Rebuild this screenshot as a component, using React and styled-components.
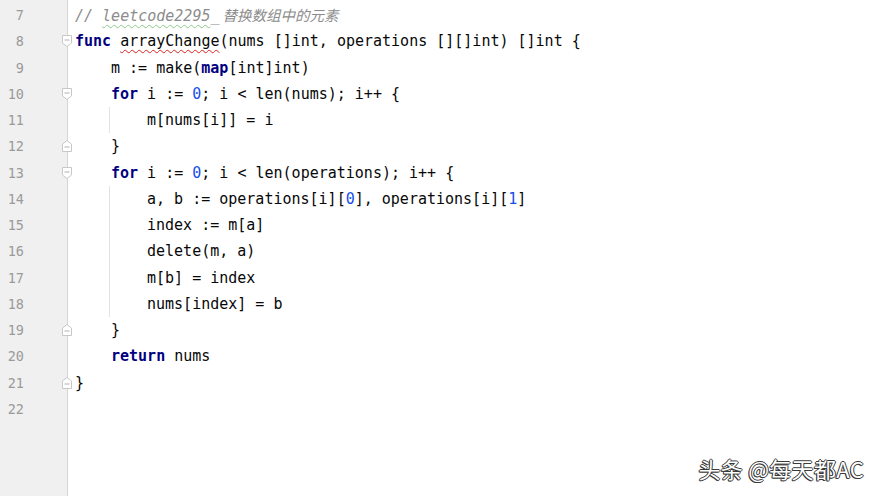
import React from "react";
import styled, { createGlobalStyle } from "styled-components";

const Global = createGlobalStyle`
  html, body { margin: 0; padding: 0; background: #fff; overflow: hidden; }
  #root { width: 883px; height: 496px; }
`;

const LINE_H = 26.25;

const Editor = styled.div`
  position: relative;
  display: flex;
  width: 883px;
  height: 496px;
  background: #ffffff;
  font-family: "DejaVu Sans Mono", "Liberation Mono", "Noto Sans CJK SC", monospace;
  font-size: 15px;
`;

const Gutter = styled.div`
  display: flex;
  flex-direction: column;
  width: 68px;
  padding-top: 2px;
  background: #f0f0f0;
  border-right: 1px solid #d4d4d4;
  box-sizing: border-box;
  flex: none;
`;

const GutterRow = styled.div`
  display: flex;
  align-items: center;
  height: ${LINE_H}px;
`;

const LineNo = styled.span`
  width: 24px;
  text-align: right;
  color: #9a9a9a;
  font-family: "DejaVu Sans Mono", monospace;
  font-size: 13.5px;
`;

const FoldSlot = styled.span`
  display: flex;
  margin-left: auto;
  margin-right: -6px;
  width: 12px;
  height: 14px;
  position: relative;
  z-index: 1;
`;

const Code = styled.div`
  display: flex;
  flex-direction: column;
  padding-top: 2px;
  padding-left: 7px;
`;

const Line = styled.div`
  position: relative;
  height: ${LINE_H}px;
  line-height: ${LINE_H}px;
  padding-left: ${(p) => p.$indent * 36}px;
  white-space: pre;
  color: #080808;
`;

const Guide = styled.span`
  position: absolute;
  left: 34px;
  top: 0;
  bottom: 0;
  width: 1px;
  background: #e3e3e3;
`;

const Kw = styled.span`
  color: #000080;
  font-weight: bold;
`;

const Num = styled.span`
  color: #1750eb;
`;

const Comment = styled.span`
  color: #8c8c8c;
  font-style: italic;
`;

const Cjk = styled.span`
  font-family: "Noto Sans CJK SC", sans-serif;
  font-size: 14.5px;
  font-style: italic;
  margin-left: 3px;
`;

const Typo = styled.span`
  text-decoration: underline wavy ${(p) => p.$color};
  text-decoration-thickness: 1px;
  text-underline-offset: 3px;
  text-decoration-skip-ink: none;
`;

const Watermark = styled.div`
  position: absolute;
  right: 19px;
  bottom: 17px;
  line-height: 1;
  color: #ffffff;
  font-family: "Noto Sans CJK SC", "Noto Sans", sans-serif;
  font-size: 22px;
  letter-spacing: 0.3px;
  text-shadow: -1px 0 #3a3a3a, 1px 0 #3a3a3a, 0 -1px #3a3a3a, 0 1px #3a3a3a, -1px 1px #3a3a3a;
`;

function Fold({ dir }) {
  return (
    <svg width="12" height="14" viewBox="0 0 12 14">
      {dir === "down" ? (
        <path d="M1.5 1.5 H10.5 V9 L6 12.5 L1.5 9 Z" fill="#ffffff" stroke="#c8c8c8" strokeWidth="1" />
      ) : (
        <path d="M1.5 12.5 H10.5 V5 L6 1.5 L1.5 5 Z" fill="#ffffff" stroke="#c8c8c8" strokeWidth="1" />
      )}
      <line x1="3.5" x2="8.5" y1={dir === "down" ? 6 : 8} y2={dir === "down" ? 6 : 8} stroke="#b0b0b0" strokeWidth="1" />
    </svg>
  );
}

const lines = [
  { n: 7, indent: 0, c: (
    <Comment>// <Typo $color="#8fc88f">leetcode2295</Typo>_<Cjk>替换数组中的元素</Cjk></Comment>
  ) },
  { n: 8, indent: 0, fold: "down", c: (
    <><Kw>func</Kw>{" "}<Typo $color="#e02020">arrayChange</Typo>(nums []int, operations [][]int) []int {"{"}</>
  ) },
  { n: 9, indent: 1, c: (<>m := make(<Kw>map</Kw>[int]int)</>) },
  { n: 10, indent: 1, fold: "down", c: (<><Kw>for</Kw> i := <Num>0</Num>; i {"<"} len(nums); i++ {"{"}</>) },
  { n: 11, indent: 2, guide: true, c: (<>m[nums[i]] = i</>) },
  { n: 12, indent: 1, fold: "up", c: (<>{"}"}</>) },
  { n: 13, indent: 1, fold: "down", c: (<><Kw>for</Kw> i := <Num>0</Num>; i {"<"} len(operations); i++ {"{"}</>) },
  { n: 14, indent: 2, guide: true, c: (<>a, b := operations[i][<Num>0</Num>], operations[i][<Num>1</Num>]</>) },
  { n: 15, indent: 2, guide: true, c: (<>index := m[a]</>) },
  { n: 16, indent: 2, guide: true, c: (<>delete(m, a)</>) },
  { n: 17, indent: 2, guide: true, c: (<>m[b] = index</>) },
  { n: 18, indent: 2, guide: true, c: (<>nums[index] = b</>) },
  { n: 19, indent: 1, fold: "up", c: (<>{"}"}</>) },
  { n: 20, indent: 1, c: (<><Kw>return</Kw> nums</>) },
  { n: 21, indent: 0, fold: "up", c: (<>{"}"}</>) },
  { n: 22, indent: 0, c: null },
];

export default function App() {
  return (
    <>
      <Global />
      <Editor>
        <Gutter>
          {lines.map((l) => (
            <GutterRow key={l.n}>
              <LineNo>{l.n}</LineNo>
              {l.fold && (
                <FoldSlot>
                  <Fold dir={l.fold} />
                </FoldSlot>
              )}
            </GutterRow>
          ))}
        </Gutter>
        <Code>
          {lines.map((l) => (
            <Line key={l.n} $indent={l.indent}>
              {l.guide && <Guide />}
              {l.c}
            </Line>
          ))}
        </Code>
        <Watermark>头条 @每天都AC</Watermark>
      </Editor>
    </>
  );
}
